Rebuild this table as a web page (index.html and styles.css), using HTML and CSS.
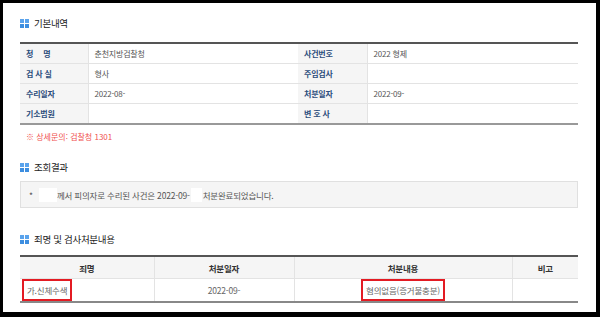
FILE: index.html
```html
<!DOCTYPE html>
<html lang="ko">
<head>
<meta charset="utf-8">
<link rel="stylesheet" href="styles.css">
</head>
<body>
<div class="frame">
  <h2 class="sec-title first"><span class="ico"><i></i><i></i><i></i><i></i></span>기본내역</h2>
  <table class="info">
    <colgroup><col class="c1"><col class="c2"><col class="c3"><col class="c4"></colgroup>
    <tr><th>청&nbsp;&nbsp;&nbsp;&nbsp;&nbsp;명</th><td>춘천지방검찰청</td><th>사건번호</th><td>2022 형제</td></tr>
    <tr><th>검 사 실</th><td>형사</td><th>주임검사</th><td></td></tr>
    <tr><th>수리일자</th><td>2022-08-</td><th>처분일자</th><td>2022-09-</td></tr>
    <tr><th>기소범원</th><td></td><th>변 호 사</th><td></td></tr>
  </table>
  <p class="note">※ 상세문의: 검찰청 1301</p>

  <h2 class="sec-title second"><span class="ico"><i></i><i></i><i></i><i></i></span>조회결과</h2>
  <div class="result">* <span class="mask m1"></span>께서 피의자로 수리된 사건은 2022-09-<span class="mask m2"></span>처분완료되었습니다.</div>

  <h2 class="sec-title third"><span class="ico"><i></i><i></i><i></i><i></i></span>죄명 및 검사처분내용</h2>
  <table class="list">
    <colgroup><col class="d1"><col class="d2"><col class="d3"><col class="d4"></colgroup>
    <tr><th>죄명</th><th>처분일자</th><th>처분내용</th><th>비고</th></tr>
    <tr><td class="left"><span class="hl">가.신체수색</span></td><td>2022-09-</td><td><span class="hl">혐의없음(증거불충분)</span></td><td></td></tr>
  </table>
</div>
</body>
</html>
```
FILE: styles.css
```css
html, body { margin: 0; padding: 0; }
body {
  background: #000;
  width: 600px;
  height: 317px;
  overflow: hidden;
  font-family: "Noto Sans CJK KR", "Noto Sans", sans-serif;
}
.frame {
  background: #fff;
  margin: 3px 0 0 3px;
  width: 593px;
  height: 309px;
  padding: 0 18px 0 17px;
  box-sizing: border-box;
  overflow: hidden;
}
.sec-title {
  display: flex;
  align-items: center;
  gap: 5px;
  margin: 0;
  height: 16px;
  font-size: 9.5px;
  font-weight: normal;
  color: #222;
  letter-spacing: -0.3px;
}
.sec-title.first { padding-top: 12px; }
.sec-title.second { margin-top: 16px; }
.sec-title.third { margin-top: 23px; }
.ico {
  display: grid;
  grid-template-columns: 4px 4px;
  grid-template-rows: 4px 4px;
  gap: 1px;
  width: 9px;
  height: 9px;
}
.ico i { background: #3d8ee0; display: block; }
.ico i:nth-child(1), .ico i:nth-child(2) { background: #5aa3ec; }

table {
  border-collapse: collapse;
  width: 558px;
  table-layout: fixed;
  font-size: 8px;
  letter-spacing: -0.2px;
}
.info {
  margin-top: 11px;
  border-top: 2px solid #555;
  border-bottom: 2px solid #999;
}
.c1 { width: 68px; } .c2 { width: 210px; } .c3 { width: 69px; } .c4 { width: 211px; }
.info th, .info td {
  height: 19px;
  padding: 0 0 0 6px;
  border-bottom: 1px solid #e3e3e3;
  text-align: left;
  vertical-align: middle;
}
.info th {
  background: #f5f5f5;
  color: #2c4d7c;
  font-weight: bold;
  border-right: 1px solid #e3e3e3;
}
.info td { color: #555; padding-left: 6px; }
.info tr:last-child th, .info tr:last-child td { border-bottom: 0; }

.note {
  margin: 6px 0 0 6px;
  font-size: 8px;
  line-height: 12px;
  color: #f0504f;
}

.result {
  margin-top: 6px;
  height: 27px;
  box-sizing: border-box;
  border: 1px solid #e0e0e0;
  background: #f5f5f5;
  font-size: 8.5px;
  letter-spacing: -0.2px;
  color: #555;
  display: flex;
  align-items: center;
  padding-left: 8px;
  white-space: pre;
}
.result .mask { display: inline-block; background: #fff; height: 14px; }
.result .m1 { width: 18px; margin: 0 0 0 4px; }
.result .m2 { width: 11px; margin: 0 1px 0 1px; }

.list {
  margin-top: 8px;
  border-top: 2px solid #555;
  border-bottom: 2px solid #888;
  font-size: 8.5px;
}
.d1 { width: 134px; } .d2 { width: 140px; } .d3 { width: 218px; } .d4 { width: 66px; }
.list th {
  height: 21px;
  background: #f5f5f5;
  color: #333;
  font-weight: bold;
  border-bottom: 1px solid #e3e3e3;
  border-right: 1px solid #e3e3e3;
  text-align: center;
  padding: 0;
}
.list td {
  height: 21px;
  color: #666;
  text-align: center;
  border-right: 1px solid #e3e3e3;
  padding: 0;
  vertical-align: middle;
}
.list th:last-child, .list td:last-child { border-right: 0; }
.list td.left { text-align: left; padding-left: 2px; }
.hl {
  display: inline-block;
  border: 2px solid #e31b23;
  height: 18px;
  line-height: 18px;
  padding: 0 3px;
  vertical-align: middle;
}
```
